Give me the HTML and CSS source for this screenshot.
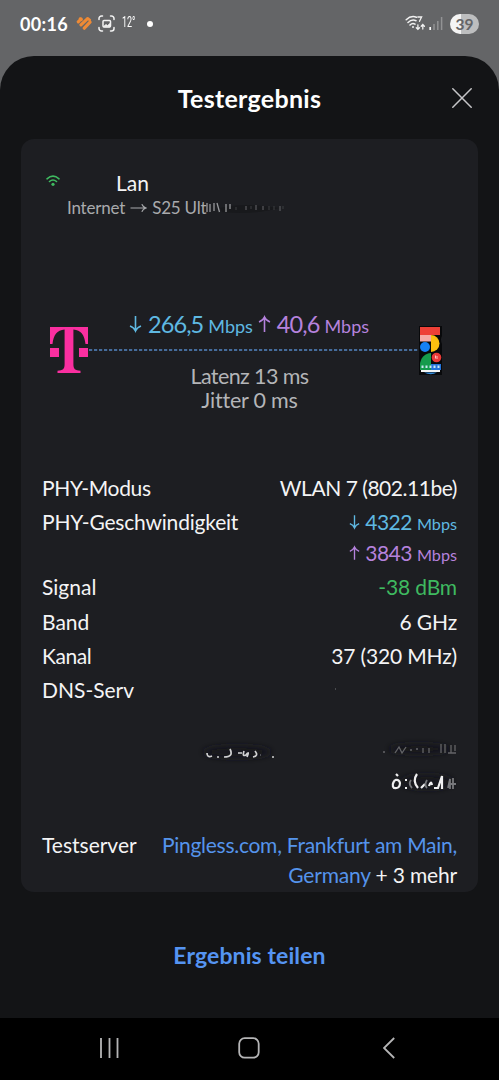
FILE: index.html
```html
<!DOCTYPE html>
<html lang="de">
<head>
<meta charset="utf-8">
<title>Testergebnis</title>
<link rel="stylesheet" href="styles.css">
</head>
<body>
<div class="phone">
  <header class="status">
    <span class="clock">00:16</span>
    <svg class="heart" width="16" height="15" viewBox="0 0 16 15" fill="none" stroke="#ee8a35" stroke-width="3.200" stroke-linecap="round"><path d="M2.300 5.800 5 3M5 8.800 11.300 2.800M8.300 12.200 14 6.200"/><path d="M4 2.600 5.500 3.800M12 2.600 13.800 4" stroke-width="2.600"/></svg>
    <svg class="shot" width="17" height="17" viewBox="0 0 17 17" fill="none" stroke="#f2f2f2" stroke-width="1.500" stroke-linecap="round"><path d="M1 4.500V3.500A2.500 2.500 0 0 1 3.500 1H4.500M12.500 1H13.500A2.500 2.500 0 0 1 16 3.500V4.500M16 12.500V13.500A2.500 2.500 0 0 1 13.500 16H12.500M4.500 16H3.500A2.500 2.500 0 0 1 1 13.500V12.500"/><rect x="5" y="5.500" width="7.500" height="6.500" rx="1"/><path d="M5.500 11.500 8 9.500 9.500 10.500 12 8.500V11.500Z" fill="#f2f2f2" stroke-width=".8"/></svg>
    <span class="temp">12°</span>
    <span class="dot"></span>
    <span class="spacer"></span>
    <svg class="wifi7" width="21" height="17" viewBox="0 0 21 17" fill="none" stroke="#f2f2f2" stroke-width="1.500" stroke-linecap="round"><path d="M1.200 4.800Q5.800.2 11.400 2.200M3 7.500Q6.800 3.800 11 5.700M5 10Q7.500 7.600 10 9.200"/><circle cx="8" cy="12" r="1" fill="#f2f2f2" stroke="none"/><path d="M12.800 2H16.600L14.500 6.300M12.900 9.800V14M11.300 12.700 12.900 14.400 14.500 12.700M17.800 14V10M16.200 11.200 17.800 9.500 19.400 11.200" stroke-width="1.300"/></svg>
    <svg class="bars" width="14" height="15" viewBox="0 0 14 15"><path d="M1.200 11V14" stroke="#fff" stroke-width="1.700"/><path d="M5 8V14M8.800 5V14M12.600 1V14" stroke="#929394" stroke-width="1.500"/></svg>
    <span class="battery">39</span>
  </header>

  <main class="sheet">
    <div class="sheet-head">
      <h1 class="title">Testergebnis</h1>
      <svg class="close" width="20" height="20" viewBox="0 0 20 20" stroke="#c6c6c8" stroke-width="1.500" stroke-linecap="round"><path d="M.8.8 19.200 19.200M19.200.8.8 19.200"/></svg>
    </div>

    <section class="card">
      <div class="network">
        <svg class="wifi" width="14" height="12" viewBox="0 0 14 12" fill="none" stroke="#3fba60" stroke-width="1.600" stroke-linecap="round"><path d="M1 3.800Q7-1.500 13 3.800M3.500 6.500Q7 3.500 10.500 6.500"/><circle cx="7" cy="9.300" r="1.600" fill="#3fba60" stroke="none"/></svg>
        <div class="net-text">
          <div class="ssid">Lan</div>
          <div class="route"><span>Internet</span><svg width="17" height="10" viewBox="0 0 17 10" fill="none" stroke="#a9aaad" stroke-width="1.200"><path d="M.5 5H16M11.800 1.200Q13 4 16 5Q13 6 11.800 8.800"/></svg><span>S25 Ult</span><svg class="smear" width="90" height="16" viewBox="0 0 90 16"><path d="M14 8Q40 2 73 8Q50 15 16 12Z" fill="#18191c"/><path d="M1 3V12M4 4V12M8 3V11M11 3 13.500 12M20 4V12M24 4V9" stroke="#97989b" stroke-width="1.300"/><path d="M40 6V10M50 5V10M57 6V10M74 6V11" stroke="#66676a"/><path d="M30 7V10M45 6V9M63 6V10M68 6V10M77 6V9" stroke="#3d3e41"/></svg></div>
        </div>
      </div>

      <div class="diagram">
        <svg class="telekom" width="38" height="46" viewBox="0 0 38 46" fill="#fa2fa0"><path d="M0 0H38V17H35.500C34.500 8 31 3 23.400 2.500V37C23.400 42 25 43.500 30.500 43.700V46H7.500V43.700C13 43.500 14.600 42 14.600 37V2.500C7 3 3.500 8 2.500 17H0Z"/><path d="M0 21H9V30H0ZM29 21H38V30H29Z"/></svg>
        <div class="middle">
          <div class="speeds">
            <span class="down"><svg width="13" height="18" viewBox="0 0 13 18"><path d="M6.500 1V16M1 11Q5 12.500 6.500 16Q8 12.500 12 11"/></svg><b>266,5</b> <small>Mbps</small></span>
            <span class="up"><svg width="13" height="18" viewBox="0 0 13 18"><path d="M6.500 17V2M1 7Q5 5.500 6.500 2Q8 5.500 12 7"/></svg><b>40,6</b> <small>Mbps</small></span>
          </div>
          <svg class="line" width="331" height="2" viewBox="0 0 331 2"><path d="M1 1H331" stroke="#5386c4" stroke-width="1.500" stroke-dasharray="3.200 1.800"/></svg>
          <div class="latency">Latenz 13 ms</div>
          <div class="jitter">Jitter 0 ms</div>
        </div>
        <svg class="device" width="23" height="49" viewBox="0 0 23 49"><path d="M0 0H23V10Q21 13 23 18V49H0Z" fill="#08090b"/><path d="M1 1H21V9H1Z" fill="#ee4037"/><path d="M1 9H12V15.500H1Z" fill="#f5aaa6"/><path d="M12 9A8.500 8.500 0 0 1 12 26Z" fill="#fbbf10"/><circle cx="6" cy="21" r="5" fill="#1781f5"/><path d="M1 39A11 12 0 0 1 12 27V39Z" fill="#159b4c"/><circle cx="17.500" cy="31.500" r="4.800" fill="#e93b38"/><path d="M16.500 29.500V32.500M18 30V33" stroke="#ffc1bd"/><path d="M1 38H12V44H1Z" fill="#159b4c"/><path d="M12 38H22V44H12Z" fill="#2474da"/><path d="M2.500 39.500H4.500V42H2.500ZM6.500 39.500H8.500V42H6.500ZM10.500 39.500H12.500V42H10.500ZM14.500 39.500H16.500V42H14.500ZM18.500 39.500H20.500V42H18.500Z" fill="#c9e8f4"/><path d="M2 44H21V46H2Z" fill="#f4f5f5"/><path d="M5 46.500H18Q12 50 5 46.500Z" fill="#358ddd"/></svg>
      </div>

      <dl class="details">
        <div class="row"><dt class="k1">PHY-Modus</dt><dd class="v1">WLAN 7 (802.11be)</dd></div>
        <div class="row"><dt class="k2">PHY-Geschwindigkeit</dt><dd>
          <div class="rate down"><svg width="11" height="16" viewBox="0 0 13 18"><path d="M6.500 1V16M1 11Q5 12.500 6.500 16Q8 12.500 12 11"/></svg><b>4322</b> <small>Mbps</small></div>
          <div class="rate up"><svg width="11" height="16" viewBox="0 0 13 18"><path d="M6.500 17V2M1 7Q5 5.500 6.500 2Q8 5.500 12 7"/></svg><b>3843</b> <small>Mbps</small></div>
        </dd></div>
        <div class="row"><dt>Signal</dt><dd class="v3">-38 dBm</dd></div>
        <div class="row"><dt>Band</dt><dd>6 GHz</dd></div>
        <div class="row"><dt class="k5">Kanal</dt><dd>37 (320 MHz)</dd></div>
        <div class="row dns"><dt>DNS-Serv</dt><dd><svg width="320" height="120" viewBox="138 675 320 120" fill="none"><defs><filter id="soft" x="-.1" y="-.2" width="1.200" height="1.400"><feGaussianBlur stdDeviation="3"/></filter><filter id="slight"><feGaussianBlur stdDeviation=".35"/></filter></defs><g filter="url(#soft)" fill="#18191c"><ellipse cx="238" cy="752" rx="34" ry="6"/><ellipse cx="420" cy="749" rx="30" ry="5"/><ellipse cx="428" cy="782" rx="26" ry="7"/></g><g filter="url(#slight)"><path d="M336 689h1" stroke="#77787a"/><path d="M208 753Q208 758 213 756M218 757h2M231 749Q235 757 225 757M239 753h4M245 751Q243 757 247 755Q251 750 248 757M256 751Q260 756 254 757M273 757h2" stroke="#d0d1d2" stroke-width="1.700"/><path d="M261 755h1M384 752h2M396 753 400 747 403 753 407 747M411 750h2M417 749h2M424 748V753M430 748V753M442 744V753M446 744V753M449 753H457M452 745V753M456 745V751" stroke="#636467" stroke-width="1.300"/><path d="M397 774l2 2M396 780Q392 785 395 788Q401 789 401 783Q400 779 396 780M406 780h2M406 788h2M418 774Q413 781 419 788M422 788l4-4M430 786q2-6 3-1M435 788h4l4-12v13" stroke="#efeff0" stroke-width="2.200"/><path d="M412 780Q409 784 413 788M428 780q-3 5 0 8M449 788l2-9v10M454 778v11M451 784h6" stroke="#77787b" stroke-width="1.800"/></g></svg></dd></div>
        <div class="row server"><dt>Testserver</dt><dd><div class="s1">Pingless.com, Frankfurt am Main,</div><div class="s2">Germany <span>+ 3 mehr</span></div></dd></div>
      </dl>
    </section>
    <a class="share">Ergebnis teilen</a>
  </main>

  <nav class="nav">
    <svg width="20" height="20" viewBox="0 0 20 20"><path d="M1 0V20M9.500 0V20M17.500 0V20"/></svg>
    <svg class="home" width="22" height="22" viewBox="0 0 22 22"><rect x="1.200" y="1.200" width="19.500" height="19.500" rx="5.500"/></svg>
    <svg width="12" height="22" viewBox="0 0 12 22"><path d="M11.200 1 1 11 11.200 21"/></svg>
  </nav>
</div>
</body>
</html>
```
FILE: styles.css
```css
* { box-sizing: border-box; }
body { margin: 0; background: #000; font-family: Lato, "Open Sans", sans-serif; color: #f4f4f5; font-variant-ligatures: none; }
svg { display: block; flex: none; }
h1, dl, dt, dd { margin: 0; font-weight: 400; }
b { font-weight: 400; }
.phone { width: 499px; height: 1080px; display: flex; flex-direction: column; background: #646567; overflow: hidden; }

.status { height: 56px; padding: 0 20px 9px 20px; display: flex; align-items: center; }
.clock { width: 56px; font-size: 18px; font-weight: 700; letter-spacing: .3px; color: #fff; }
.shot { margin-left: 6px; }
.temp { margin-left: 7px; width: 14px; font: 14.5px/1 "Roboto", sans-serif; transform: scaleX(.62); transform-origin: left; color: #fff; }
.dot { width: 6px; height: 6px; border-radius: 50%; background: #fff; margin-left: 11px; }
.spacer { flex: 1; }
.bars { margin-left: 3px; }
.battery { width: 29px; height: 20px; margin-left: 7px; border-radius: 10px; background: linear-gradient(90deg, #f4f4f4 39%, #bdbebf 39%); color: #646567; font-size: 15.5px; font-weight: 700; line-height: 20px; text-align: center; }

.sheet { height: 962px; border-radius: 34px 34px 0 0; background: #131416; padding: 0 21px; display: flex; flex-direction: column; }
.sheet-head { height: 83px; display: grid; grid-template-columns: 1fr auto 1fr; align-items: center; padding: 1px 6px 0; }
.title { grid-column: 2; font-size: 25px; font-weight: 700; letter-spacing: .3px; color: #fff; line-height: 30px; }
.close { justify-self: end; }

.card { height: 753px; border-radius: 13px; background: #1d1e22; padding: 0 21px; display: flex; flex-direction: column; }
.network { flex: none; height: 166px; display: flex; padding: 30px 0 0 4px; }
.wifi { margin-top: 6px; }
.net-text { margin-left: 7px; }
.ssid { font-size: 21px; line-height: 28px; margin-left: 49px; }
.route { display: flex; align-items: center; font-size: 17px; letter-spacing: -.2px; line-height: 22px; color: #a9aaad; }
.route svg { margin: 0 5px; }
.route .smear { margin: 0; }

.diagram { flex: none; height: 168px; display: flex; margin: 0 16px 0 8px; }
.telekom { margin-top: 22px; }
.middle { flex: 1; display: flex; flex-direction: column; align-items: center; }
.speeds { flex: none; display: flex; gap: 5px; height: 44px; padding-top: 4px; margin-right: 9px; line-height: 30px; font-size: 23.5px; }
.speeds span { display: flex; align-items: baseline; }
.speeds b { letter-spacing: -.9px; }
.speeds svg { margin-right: 6px; }
.speeds small { font-size: 18px; margin-left: 5px; }
.down { color: #5fb9e2; }
.up { color: #b582dd; }
.down svg, .up svg { fill: none; stroke: currentColor; stroke-width: 1.600; }
.latency, .jitter { font-size: 21.5px; line-height: 24px; color: #b4b5b8; margin-right: 8px; }
.latency { margin-top: 13px; letter-spacing: -.6px; }
.jitter { letter-spacing: -.2px; }
.device { margin-top: 21px; }

.details { flex: 1; min-height: 0; }
.row { display: flex; justify-content: space-between; font-size: 21px; line-height: 30px; margin-bottom: 4.200px; }
.row dd { text-align: right; letter-spacing: -.15px; }
.k1 { letter-spacing: -.35px; }
.row .v1 { letter-spacing: -.47px; }
.k2 { letter-spacing: -.2px; }
.k5 { letter-spacing: -.4px; }
.rate { display: flex; justify-content: flex-end; align-items: baseline; height: 30.500px; }
.rate b { letter-spacing: -.5px; }
.rate svg { margin-right: 5px; }
.rate small { font-size: 16.2px; letter-spacing: 0; margin-left: 5px; }
.v3 { color: #3fba60; }
.dns { height: 151.300px; }
.s1, .s2 { color: #5594ec; white-space: nowrap; }
.s1 { letter-spacing: -.27px; }
.s2 { letter-spacing: -.18px; }
.s2 span { color: #f4f4f5; }
.share { align-self: center; margin-top: 46px; font-size: 23px; letter-spacing: .1px; line-height: 34px; font-weight: 700; color: #5594f2; }

.nav { flex: 1; background: #000; display: flex; justify-content: space-between; align-items: center; padding: 0 104px 2px 100px; }
.nav svg { fill: none; stroke: #b5b5b6; stroke-width: 1.800; }
.nav .home { margin-right: 5px; }
```
